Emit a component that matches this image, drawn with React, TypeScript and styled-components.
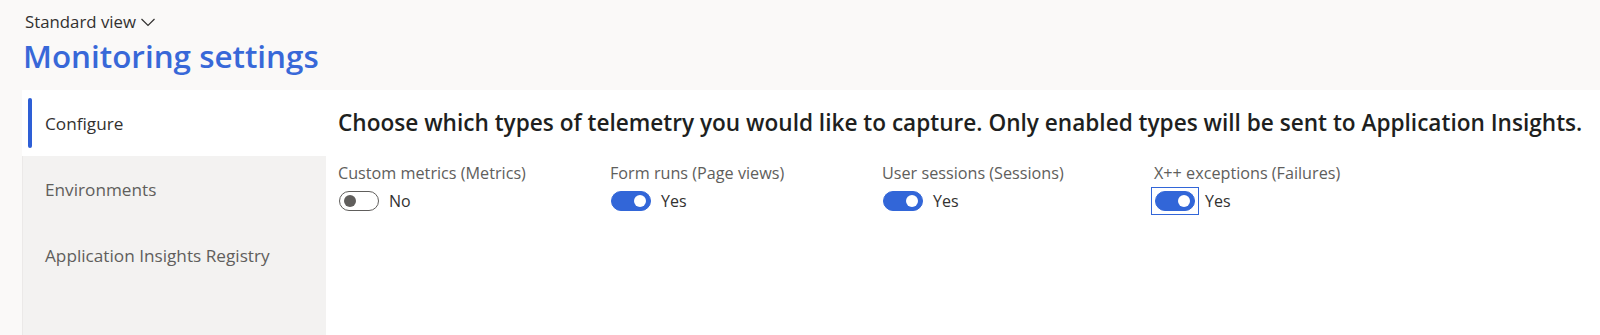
import React from "react";
import styled, { createGlobalStyle } from "styled-components";

const Global = createGlobalStyle`
  html, body { margin: 0; padding: 0; }
  body {
    background: #faf9f8;
    font-family: "Open Sans", "Noto Sans", Arial, sans-serif;
    color: #323130;
  }
`;

const Page = styled.div`
  width: 1600px;
  height: 335px;
  overflow: hidden;
  display: flex;
  flex-direction: column;
  background: #faf9f8;
`;

const Header = styled.header`
  padding: 10px 0 0 25px;
  height: 90px;
  box-sizing: border-box;
`;

const ViewSwitch = styled.div`
  display: flex;
  align-items: center;
  gap: 4px;
  font-size: 16.8px;
  line-height: 24px;
  color: #323130;
  height: 24px;
  cursor: pointer;
`;

const Title = styled.h1`
  margin: 0 0 0 -2px;
  font-size: 31.4px;
  font-weight: 600;
  color: #3868d8;
  line-height: 44px;
`;

const Body = styled.div`
  flex: 1;
  display: flex;
  margin-left: 22px;
`;

const Nav = styled.nav`
  width: 304px;
  background: #f3f2f1;
  display: flex;
  flex-direction: column;
  box-shadow: inset 1px 0 0 #ebe9e8;
`;

const NavItem = styled.div<{ $active?: boolean }>`
  position: relative;
  height: 66px;
  display: flex;
  align-items: center;
  padding-left: 23px;
  font-size: 17.2px;
  color: ${(p) => (p.$active ? "#323130" : "#605e5c")};
  background: ${(p) => (p.$active ? "#ffffff" : "transparent")};
  &::before {
    content: "";
    display: ${(p) => (p.$active ? "block" : "none")};
    position: absolute;
    left: 6px;
    top: 8px;
    bottom: 8px;
    width: 4px;
    border-radius: 2px;
    background: #2e5fd6;
  }
`;

const Content = styled.main`
  flex: 1;
  background: #ffffff;
  padding: 18px 0 0 12px;
`;

const Heading = styled.h2`
  margin: 0;
  font-size: 22.6px;
  font-weight: 600;
  color: #201f1e;
  line-height: 30px;
`;

const Fields = styled.div`
  display: grid;
  grid-template-columns: repeat(4, 272px);
  margin-top: 25px;
`;

const Field = styled.div`
  display: flex;
  flex-direction: column;
  gap: 7px;
`;

const Label = styled.label`
  font-size: 16.2px;
  color: #605e5c;
  line-height: 20px;
`;

const ToggleRow = styled.div`
  display: flex;
  align-items: center;
  gap: 10px;
  margin-left: 1px;
`;

const ToggleFrame = styled.span<{ $focused?: boolean }>`
  display: inline-flex;
  padding: 3px;
  margin: -4px;
  border: 1px solid ${(p) => (p.$focused ? "#3266d8" : "transparent")};
`;

const Track = styled.span<{ $on: boolean }>`
  width: 40px;
  height: 20px;
  box-sizing: border-box;
  border-radius: 10px;
  display: flex;
  align-items: center;
  justify-content: ${(p) => (p.$on ? "flex-end" : "flex-start")};
  padding: 0 4px;
  background: ${(p) => (p.$on ? "#3266d8" : "#ffffff")};
  border: 1px solid ${(p) => (p.$on ? "#3266d8" : "#605e5c")};
`;

const Thumb = styled.span<{ $on: boolean }>`
  width: 12px;
  height: 12px;
  border-radius: 50%;
  background: ${(p) => (p.$on ? "#ffffff" : "#605e5c")};
`;

const StateText = styled.span`
  font-size: 16px;
  color: #323130;
`;

const fields = [
  { label: "Custom metrics (Metrics)", on: false },
  { label: "Form runs (Page views)", on: true },
  { label: "User sessions (Sessions)", on: true },
  { label: "X++ exceptions (Failures)", on: true, focused: true },
];

export default function App() {
  return (
    <Page>
      <Global />
      <Header>
        <ViewSwitch>
          Standard view
          <svg width="16" height="16" viewBox="0 0 16 16" fill="none">
            <path d="M1.5 5l6.5 6.5 6.5-6.5" stroke="#323130" strokeWidth="1.2" />
          </svg>
        </ViewSwitch>
        <Title>Monitoring settings</Title>
      </Header>
      <Body>
        <Nav>
          <NavItem $active>Configure</NavItem>
          <NavItem>Environments</NavItem>
          <NavItem>Application Insights Registry</NavItem>
        </Nav>
        <Content>
          <Heading>
            Choose which types of telemetry you would like to capture. Only enabled types will be sent to
            Application Insights.
          </Heading>
          <Fields>
            {fields.map((f) => (
              <Field key={f.label}>
                <Label>{f.label}</Label>
                <ToggleRow>
                  <ToggleFrame $focused={f.focused}>
                    <Track $on={f.on}>
                      <Thumb $on={f.on} />
                    </Track>
                  </ToggleFrame>
                  <StateText>{f.on ? "Yes" : "No"}</StateText>
                </ToggleRow>
              </Field>
            ))}
          </Fields>
        </Content>
      </Body>
    </Page>
  );
}
